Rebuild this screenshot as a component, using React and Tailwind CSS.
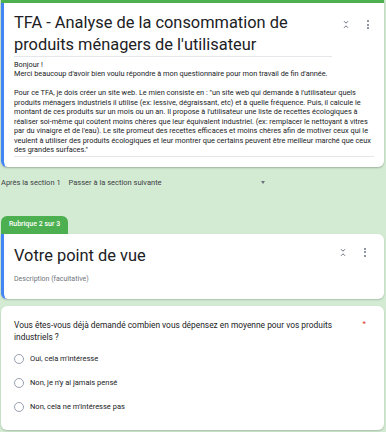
import React from "react"

const font = { fontFamily: "Roboto, 'Liberation Sans', sans-serif" }

function Collapse(){
 return(
  <svg width="8" height="9" viewBox="0 0 8 9" className="text-gray-500">
   <path d="M2 1.2 L4 3.2 L6 1.2" fill="none" stroke="currentColor" strokeWidth="1"/>
   <path d="M2 7.8 L4 5.8 L6 7.8" fill="none" stroke="currentColor" strokeWidth="1"/>
  </svg>
 )
}

function Dots(){
 return(
  <div className="flex flex-col gap-[1.5px] items-center w-[4px]">
   <span className="w-[2px] h-[2px] bg-gray-500 rounded-full"/>
   <span className="w-[2px] h-[2px] bg-gray-500 rounded-full"/>
   <span className="w-[2px] h-[2px] bg-gray-500 rounded-full"/>
  </div>
 )
}

function Radio({label}){
 return(
  <div className="flex items-center gap-[6px] h-[24px]">
   <span className="w-[10px] h-[10px] rounded-full border border-gray-400 bg-white"/>
   <span className="text-[7.5px] text-[#202124]">{label}</span>
  </div>
 )
}

export default function App(){

 return(

  <div className="min-h-screen bg-[#d3ebd3] w-[386px] h-[432px] overflow-hidden px-[1px]" style={font}>

   {/* CARD 1 */}

   <div className="bg-white rounded-b-[6px] border-t-[3px] border-[#4caf50] shadow-[0_1px_2px_rgba(0,0,0,0.25)] w-[383px]">
    <div className="border-l-[3px] border-[#4285f4] pl-[10px] pr-[10px] pt-[9px] pb-[10px] rounded-bl-[6px]">

     <div className="flex">
      <div className="w-[318px] border-b border-gray-200">
       <h1 className="text-[16.4px] leading-[22px] text-[#202124]">
        TFA - Analyse de la consommation de produits ménagers de l'utilisateur
       </h1>
      </div>
      <div className="flex items-start gap-[16px] ml-[10px] pt-[8px]">
       <Collapse/>
       <Dots/>
      </div>
     </div>

     <div className="text-[7.35px] leading-[9.45px] text-[#202124] pt-[3px] pb-[1px] border-b border-gray-200">
      <p>Bonjour !</p>
      <p>Merci beaucoup d'avoir bien voulu répondre à mon questionnaire pour mon travail de fin d'année.</p>
      <p>&nbsp;</p>
      <p>Pour ce TFA, je dois créer un site web. Le mien consiste en : "un site web qui demande à l'utilisateur quels produits ménagers industriels il utilise (ex: lessive, dégraissant, etc) et à quelle fréquence. Puis, il calcule le montant de ces produits sur un mois ou un an. Il propose à l'utilisateur une liste de recettes écologiques à réaliser soi-même qui coûtent moins chères que leur équivalent industriel. (ex: remplacer le nettoyant à vitres par du vinaigre et de l'eau). Le site promeut des recettes efficaces et moins chères afin de motiver ceux qui le veulent à utiliser des produits écologiques et leur montrer que certains peuvent être meilleur marché que ceux des grandes surfaces."</p>
     </div>

    </div>
   </div>

   {/* AFTER SECTION */}

   <div className="flex items-center h-[32px] text-[7.5px] text-[#3c4043]">
    <span>Après la section 1</span>
    <span className="ml-[8px] w-[192px]">Passer à la section suivante</span>
    <span className="w-0 h-0 border-l-[2.5px] border-r-[2.5px] border-t-[3px] border-l-transparent border-r-transparent border-t-gray-500"/>
   </div>

   {/* TAB */}

   <div className="mt-[17px] w-[67px] h-[18px] bg-[#4caf50] rounded-t-[6px] flex items-center justify-center text-white text-[7px] font-medium">
    Rubrique 2 sur 3
   </div>

   {/* CARD 2 */}

   <div className="bg-white rounded-b-[6px] rounded-tr-[6px] shadow-[0_1px_2px_rgba(0,0,0,0.2)] w-[383px] border-l-[3px] border-[#4285f4] pl-[10px] pr-[12px] pt-[12px] h-[65px]">
    <div className="flex justify-between">
     <h2 className="text-[16.4px] leading-[20px] text-[#202124]">Votre point de vue</h2>
     <div className="flex items-start gap-[16px] pt-[2px] mr-[5px]">
      <Collapse/>
      <Dots/>
     </div>
    </div>
    <p className="text-[7px] leading-[8px] text-[#70757a] mt-[9px]">Description (facultative)</p>
   </div>

   {/* CARD 3 */}

   <div className="mt-[7px] bg-white rounded-[6px] shadow-[0_1px_2px_rgba(0,0,0,0.2)] w-[383px] pl-[13px] pr-[12px] pt-[13px] pb-[11px]">
    <div className="flex justify-between">
     <p className="text-[8.4px] leading-[12px] text-[#202124] w-[340px]">
      Vous êtes-vous déjà demandé combien vous dépensez en moyenne pour vos produits industriels ?
     </p>
     <span className="text-[#d93025] text-[8px] mr-[6px] leading-[10px]">*</span>
    </div>
    <div className="mt-[4px] flex flex-col">
     <Radio label="Oui, cela m'intéresse"/>
     <Radio label="Non, je n'y ai jamais pensé"/>
     <Radio label="Non, cela ne m'intéresse pas"/>
    </div>
   </div>

  </div>

 )

}
